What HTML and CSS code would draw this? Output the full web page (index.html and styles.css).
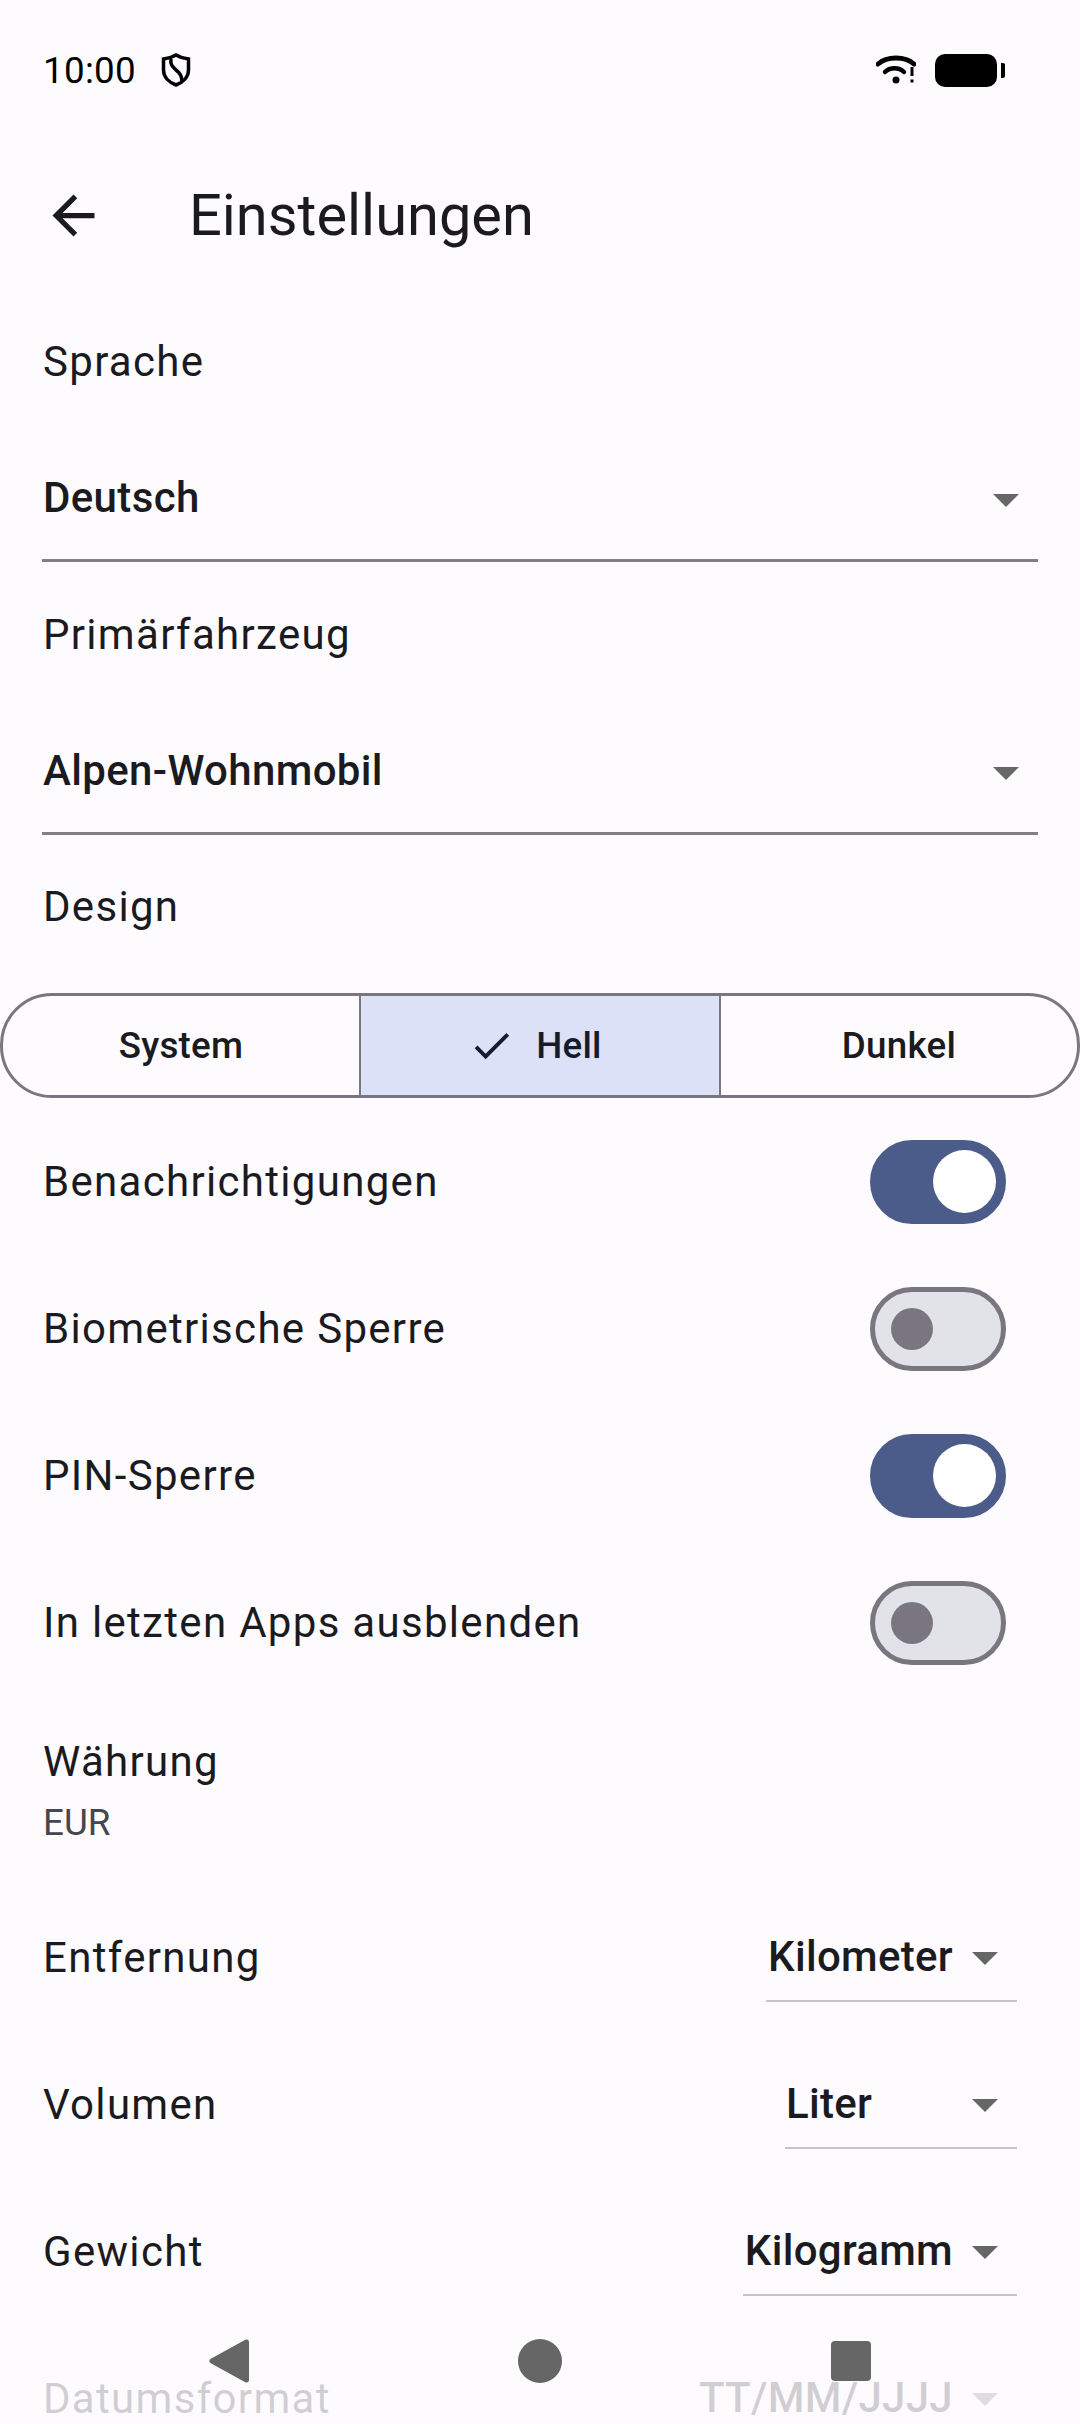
FILE: index.html
```html
<!DOCTYPE html>
<html lang="de">

<head>
  <meta charset="UTF-8">
  <meta name="viewport" content="width=device-width, initial-scale=1.0">
  <title>Einstellungen</title>
  <link rel="stylesheet" href="styles.css">
</head>

<body>
  <div class="screen">
    <div class="status-bar">
      <span class="status-time">10:00</span>
      <svg class="status-shield" width="30" height="34" viewBox="0 0 30 34" fill="none" stroke="#000" stroke-width="3.500">
        <path d="M15 2C19 4.500 23 5.500 27.500 6V17C27.500 24 22 29.500 15 32C8 29.500 2.500 24 2.500 17V6C7 5.500 11 4.500 15 2Z" />
        <path d="M10 6C9 12 12 14 15 17C19 20 21 23 21 28" />
      </svg>
      <svg class="status-wifi" width="40" height="30" viewBox="0 0 40 30" fill="none" stroke="#000">
        <path d="M2 9C11 1 29 1 38 9" stroke-width="5" stroke-linecap="round" />
        <path d="M9 17C14 12 23 12 28 17" stroke-width="4.500" stroke-linecap="round" />
        <circle cx="20" cy="25" r="3.500" fill="#000" stroke="none" />
        <path d="M36 12V21M36 24.500V27.500" stroke-width="3" />
      </svg>
      <div class="status-battery"></div>
      <div class="status-battery-nub"></div>
    </div>

    <!-- app bar -->
    <div class="app-bar">
      <svg class="back-icon" width="63" height="63" viewBox="0 0 24 24" fill="#1b1b1f">
        <path d="M20 11H7.830l5.590-5.590L12 4l-8 8 8 8 1.410-1.410L7.830 13H20v-2z" />
      </svg>
      <h1 class="app-title">Einstellungen</h1>
    </div>

    <div class="field-label">Sprache</div>
    <div class="select-field">
      <span>Deutsch</span>
      <i class="caret"></i>
    </div>

    <div class="field-label">Primärfahrzeug</div>
    <div class="select-field">
      <span>Alpen-Wohnmobil</span>
      <i class="caret"></i>
    </div>

    <div class="field-label">Design</div>
    <div class="segments">
      <div class="segment">System</div>
      <div class="segment segment-active">
        <svg width="47" height="47" viewBox="0 0 24 24" fill="#141b2c">
          <path d="M9 16.170L4.830 12l-1.410 1.410L9 19 21 7l-1.410-1.410z" />
        </svg>
        <span>Hell</span>
      </div>
      <div class="segment">Dunkel</div>
    </div>

    <div class="switch-list">
      <div class="row">
        <span>Benachrichtigungen</span>
        <div class="switch switch-on"><i></i></div>
      </div>
      <div class="row">
        <span>Biometrische Sperre</span>
        <div class="switch"><i></i></div>
      </div>
      <div class="row">
        <span>PIN-Sperre</span>
        <div class="switch switch-on"><i></i></div>
      </div>
      <div class="row">
        <span>In letzten Apps ausblenden</span>
        <div class="switch"><i></i></div>
      </div>
    </div>

    <div class="currency">
      <div class="currency-title">Währung</div>
      <div class="currency-value">EUR</div>
    </div>

    <div class="row">
      <span>Entfernung</span>
      <div class="unit-select"><span>Kilometer</span><i class="caret"></i></div>
    </div>
    <div class="row">
      <span>Volumen</span>
      <div class="unit-select unit-select-wide"><span>Liter</span><i class="caret"></i></div>
    </div>
    <div class="row">
      <span>Gewicht</span>
      <div class="unit-select"><span>Kilogramm</span><i class="caret"></i></div>
    </div>
    <div class="row">
      <span>Datumsformat</span>
      <div class="unit-select"><span>TT/MM/JJJJ</span><i class="caret"></i></div>
    </div>

    <!-- nav bar lies over the list -->
    <div class="nav-bar">
      <svg width="40" height="44" viewBox="0 0 40 44" fill="#666" stroke="#666" stroke-width="5" stroke-linejoin="round">
        <polygon points="37.500,3 37.500,41 3,22" />
      </svg>
      <div class="nav-circle"></div>
      <div class="nav-square"></div>
    </div>
  </div>
</body>

</html>
```

FILE: styles.css
```css
* {
  box-sizing: border-box;
}

html,
body {
  margin: 0;
  padding: 0;
}

body {
  background: #fefbff;
  color: #1b1b1f;
  font-family: Roboto, "Noto Sans", sans-serif;
}

.screen {
  position: relative;
  width: 1080px;
  height: 2424px;
  overflow: hidden;
  background: #fefbff;
}

/* status bar */
.status-bar {
  display: flex;
  align-items: center;
  height: 140px;
  padding: 0 75px 0 43px;
  color: #000;
}

.status-time {
  font-size: 36.750px;
  letter-spacing: 0.300px;
}

.status-shield {
  margin-left: 25px;
}

.status-wifi {
  margin-left: auto;
}

.status-battery {
  width: 62px;
  height: 33px;
  margin-left: 19px;
  border-radius: 10px;
  background: #000;
}

.status-battery-nub {
  width: 4px;
  height: 15px;
  margin-left: 4px;
  border-radius: 0 2px 2px 0;
  background: #000;
}

/* app bar */
.app-bar {
  display: flex;
  align-items: center;
  height: 150px;
  padding-left: 42px;
}

.app-title {
  margin: 0 0 0 84px;
  font-size: 57.750px;
  font-weight: 400;
}

/* language + vehicle */
.field-label {
  height: 60px;
  margin-top: 42px;
  padding-left: 43px;
  font-size: 42px;
  line-height: 60px;
  letter-spacing: 1.310px;
}

.select-field + .field-label {
  margin-top: 42.500px;
}

.select-field {
  display: flex;
  align-items: center;
  justify-content: space-between;
  height: 126px;
  margin: 44px 42px 0;
  padding: 0 19px 0 1px;
  border-bottom: 3px solid #807f85;
  font-size: 42px;
  font-weight: 500;
  letter-spacing: 0.350px;
}

.select-field .caret {
  margin-top: 6px;
}

.caret {
  width: 0;
  height: 0;
  margin-top: 4px;
  border-style: solid;
  border-width: 13px 13px 0;
  border-color: #666 transparent transparent;
}

/* theme picker */
.segments {
  display: flex;
  height: 105px;
  margin-top: 56px;
  border: 3px solid #79767f;
  border-radius: 52px;
  overflow: hidden;
  font-size: 36.750px;
  font-weight: 500;
  letter-spacing: 0.260px;
}

.segment {
  display: flex;
  flex: 1;
  align-items: center;
  justify-content: center;
  gap: 21px;
}

.segment-active {
  flex: none;
  width: 362px;
  padding-right: 10px;
  border-left: 2px solid #79767f;
  border-right: 2px solid #79767f;
  background: #dce1f8;
  color: #141b2c;
}

/* rows */
.switch-list {
  margin-top: 10px;
}

.row {
  display: flex;
  align-items: center;
  justify-content: space-between;
  height: 147px;
  padding: 0 63px 0 43px;
  font-size: 42px;
  letter-spacing: 1.310px;
}

.switch-list .row {
  padding-right: 74px;
}

.switch {
  display: flex;
  align-items: center;
  width: 136px;
  height: 84px;
  padding-left: 16px;
  border: 5px solid #79767f;
  border-radius: 42px;
  background: #e2e2e9;
}

.switch i {
  width: 42px;
  height: 42px;
  border-radius: 50%;
  background: #79767f;
}

.switch-on {
  justify-content: flex-end;
  padding: 0 5px 0 0;
  border-color: #4c5c8a;
  background: #4c5c8a;
}

.switch-on i {
  width: 63px;
  height: 63px;
  background: #fff;
}

.currency {
  padding: 36px 43px;
}

.currency-title {
  font-size: 42px;
  line-height: 60px;
  letter-spacing: 1.310px;
}

.currency-value {
  margin-top: 6px;
  color: #46464f;
  font-size: 36.750px;
  line-height: 50px;
}

.unit-select {
  display: flex;
  align-items: center;
  justify-content: space-between;
  gap: 19px;
  height: 88px;
  padding: 0 19px 0 2px;
  border-bottom: 2px solid #c6c5cb;
  font-weight: 500;
  letter-spacing: 0.300px;
}

.unit-select-wide {
  width: 232px;
  padding-left: 1px;
}

/* nav bar */
.nav-bar {
  position: absolute;
  left: 0;
  right: 0;
  bottom: 0;
  display: flex;
  align-items: center;
  justify-content: center;
  gap: 269px;
  height: 126px;
  background: rgba(254, 251, 255, 0.8);
}

.nav-circle {
  width: 44px;
  height: 44px;
  border-radius: 50%;
  background: #666;
}

.nav-square {
  width: 40px;
  height: 40px;
  border-radius: 4px;
  background: #666;
}
```
